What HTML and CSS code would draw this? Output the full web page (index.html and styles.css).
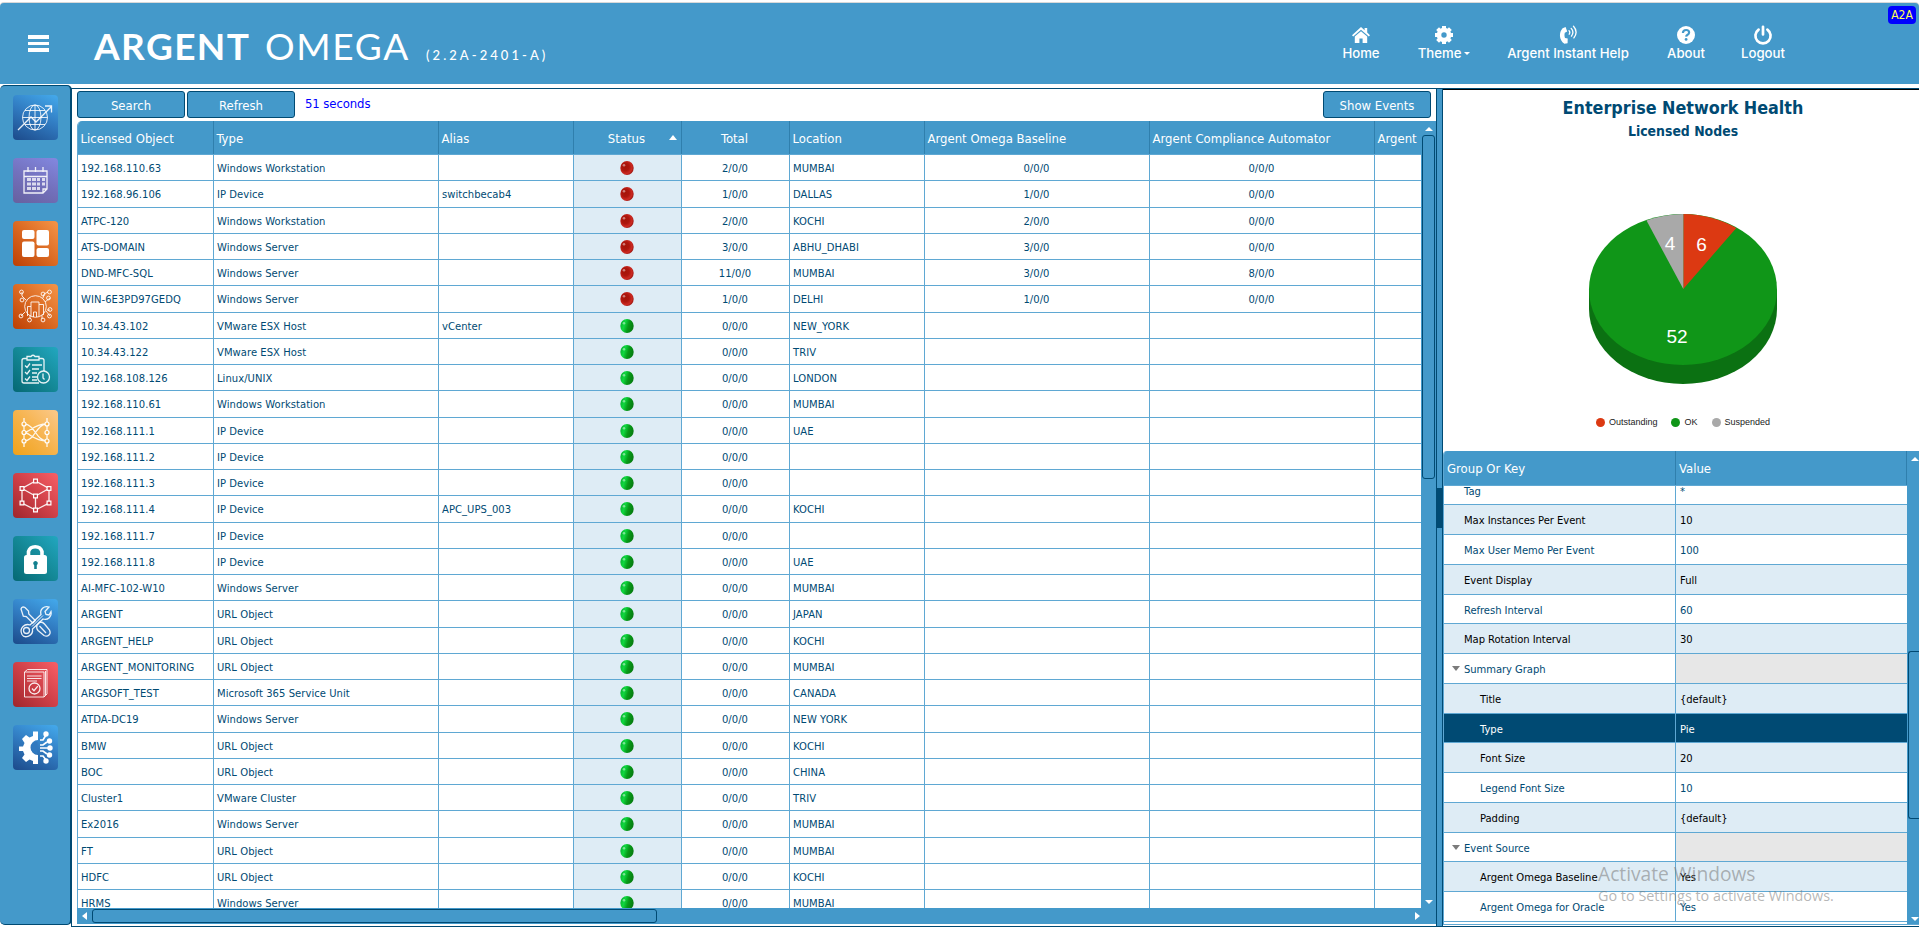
FILE: index.html
```html
<!DOCTYPE html>
<html lang="en">
<head>
<meta charset="utf-8">
<title>Argent Omega</title>
<link rel="stylesheet" href="styles.css">
</head>
<body>
<svg class="defs" width="0" height="0" aria-hidden="true">
  <defs>
    <radialGradient id="red" cx="38%" cy="42%" r="62%"><stop offset="0" stop-color="#a51408"/><stop offset=".45" stop-color="#ad160d"/><stop offset=".8" stop-color="#cc2a22"/><stop offset="1" stop-color="#a31a14"/></radialGradient>
    <linearGradient id="green" x1="0" y1=".3" x2="1" y2=".6"><stop offset="0" stop-color="#08b030"/><stop offset=".3" stop-color="#10d840"/><stop offset=".6" stop-color="#069a18"/><stop offset="1" stop-color="#077a10"/></linearGradient>
  </defs>
</svg>
<header class="topbar">
  <div class="burger"><i></i><i></i><i></i></div>
  <div class="brand"><span class="brand-a">ARGENT</span><span class="brand-o">OMEGA</span><span class="brand-v">(2.2A-2401-A)</span></div>
  <nav class="nav">
    <a class="nav-item n1"><svg viewBox="0 0 20 20"><path fill="#fff" d="M10 2 1 10.2l1.200 1.400L10 4.800l7.800 6.800 1.200-1.400-2.800-2.600V3h-2.600v2.200z"/><path fill="#fff" d="M10 6.200 3.800 11.600V18h4.600v-4.600h3.200V18h4.600v-6.400z"/></svg><span>Home</span></a>
    <a class="nav-item n2"><svg viewBox="0 0 20 20"><circle cx="10" cy="10" r="5" fill="none" stroke="#fff" stroke-width="4.600"/><g stroke="#fff" stroke-width="4"><path d="M10 1v3M10 16v3M1 10h3M16 10h3M3.600 3.600l2 2M14.400 14.400l2 2M3.600 16.400l2-2M14.400 5.600l2-2"/></g></svg><span>Theme<b class="caret"></b></span></a>
    <a class="nav-item n3"><svg viewBox="0 0 20 20"><path fill="#fff" d="M4.600 3.200 7.600 2l1.600 4.600-2.400 1.200c-.5 1.600-.4 3.600.2 5.200l2.700.5-.1 4.700-3.200.6C.8 14.800.8 7.200 4.600 3.200z"/><g fill="none" stroke="#fff" stroke-width="1.300" stroke-linecap="round"><path d="M11 5.600q1.500 1.600.2 3.600M13.200 3.400q3.300 3.500.3 7.700M15.500 1.300q5 5.500.4 11.600"/></g></svg><span>Argent Instant Help</span></a>
    <a class="nav-item n4"><svg viewBox="0 0 20 20"><circle cx="10" cy="10" r="9" fill="#fff"/><path d="M6.900 8q.2-3 3.200-3t3 2.500q0 1.400-1.500 2.200-1.400.8-1.500 2" fill="none" stroke="#4499ca" stroke-width="2.200"/><circle cx="10.100" cy="14.400" r="1.400" fill="#4499ca"/></svg><span>About</span></a>
    <a class="nav-item n5"><svg viewBox="0 0 20 20"><path d="M5.600 4.600a7.600 7.600 0 1 0 8.800 0M10 1.800v7.600" fill="none" stroke="#fff" stroke-width="2.700" stroke-linecap="round"/></svg><span>Logout</span></a>
  </nav>
  <div class="badge">A2A</div>
</header>
<div class="page">
  <aside class="side">
    <div class="tile blue"><svg viewBox="0 0 45 45"><g class="thin"><circle cx="22" cy="22.500" r="12.500"/><ellipse cx="22" cy="22.500" rx="6" ry="12.500"/><path d="M22 10v25M9.500 22.500h25M12 15.500h20M12 29.500h20"/></g><path class="ln" d="M5 35 18 22l5 5L38 12M32 11h6.500v6.500"/></svg></div>
    <div class="tile violet"><svg viewBox="0 0 45 45"><path class="ln" d="M11 13h23v18l-4 4H11zM11 18.500h23M34 31h-4v4M15 9v5M22.500 9v5M30 9v5"/><g class="ln cells"><path d="M14 21.500h4M19 21.500h4M24 21.500h3M29 21.500h3M14 26h4M19 26h4M24 26h3M29 26h3M14 30.500h4M19 30.500h4M24 30.500h3"/></g></svg></div>
    <div class="tile orange"><svg viewBox="0 0 45 45"><g fill="#fff"><rect x="9" y="9" width="12.500" height="9" rx="2"/><rect x="9" y="20.500" width="12.500" height="15.500" rx="2"/><rect x="23.500" y="9" width="12.500" height="15.500" rx="2"/><rect x="23.500" y="27" width="12.500" height="9" rx="2"/></g></svg></div>
    <div class="tile orange"><svg viewBox="0 0 45 45"><g class="thin"><circle cx="22.500" cy="22.500" r="10.800"/><path d="M14.500 32V22.500H18M18 32.500V18h8v14.500M26 20.500h4.500V31M20.500 33v-5h3v5M13 16l-4-4V8M30 14l1-4 4-2M32 18l5-4M12 28l-4 4M17 31v4M29 31v4M33 27l4 5M34 26h3"/><g><circle cx="8.500" cy="8" r="1.900"/><circle cx="9" cy="16" r="1.900"/><circle cx="30" cy="10" r="1.900"/><circle cx="36.500" cy="8" r="1.900"/><circle cx="35.500" cy="14" r="1.900"/><circle cx="8" cy="32" r="1.900"/><circle cx="16.500" cy="36" r="1.900"/><circle cx="30" cy="36" r="1.900"/><circle cx="36.500" cy="32" r="1.900"/><circle cx="37" cy="25.500" r="1.900"/></g></g></svg></div>
    <div class="tile teal"><svg viewBox="0 0 45 45"><path class="ln" d="M14 11.500H11q-2 0-2 2V34q0 2 2 2h15M26 11.500h3q2 0 2 2V24M14 13V9.500h4q2-2.500 4 0h4V13zM12 18.500l2 2 3-4M12 25l2 2 3-4M12 31.500l2 2 3-4M19 18h10M19 22h7M19 26h5M19 30h5M19 33h5"/><circle class="ln" cx="30.500" cy="30" r="6"/><path class="ln" d="M30 26.500V31l1.500 1.500"/></svg></div>
    <div class="tile yellow"><svg viewBox="0 0 45 45"><path class="ln" d="M11 8v29M34 8v29M11 14c11 0 12 17 23 17M11 31c11 0 12-17 23-17M11 22.500c6 0 9-8.500 23-8.500M11 22.500c6 0 9 8.500 23 8.500"/><g class="dot"><circle cx="11" cy="14" r="2"/><circle cx="11" cy="22.500" r="2"/><circle cx="11" cy="31" r="2"/><circle cx="34" cy="14" r="2"/><circle cx="34" cy="22.500" r="2"/><circle cx="34" cy="31" r="2"/></g></svg></div>
    <div class="tile red"><svg viewBox="0 0 45 45"><path class="ln" d="M22.500 8 36 15.500v14.500L22.500 37 9 30V15.500zM9 15.500l13.500 7.500L36 15.500M22.500 23v14"/><g class="sq"><path d="M20.600 6.100h3.800v3.800h-3.800zM7.100 13.600h3.800v3.800H7.100zM34.100 13.600h3.800v3.800h-3.800zM20.600 21.100h3.800v3.800h-3.800zM7.100 28.100h3.800v3.800H7.100zM34.100 28.100h3.800v3.800h-3.800zM20.600 35.100h3.800v3.800h-3.800z"/></g></svg></div>
    <div class="tile teal"><svg viewBox="0 0 45 45"><path d="M15.500 20v-4.500a7 6.500 0 0 1 13.500 0v4.500" fill="none" stroke="#fff" stroke-width="3.600"/><rect x="11" y="19" width="23" height="19" rx="2.500" fill="#fff"/><path d="M22.500 25a2.300 2.300 0 0 1 1.300 4.200V33h-2.600v-3.800A2.300 2.300 0 0 1 22.500 25z" fill="#12808f"/></svg></div>
    <div class="tile blue"><svg viewBox="0 0 45 45"><path class="ln" d="M8 10q1-3 4-1.500l3.500 3.500.3 3 6.500 6.500-2.500 2.500-6.500-6.500-3-.3zM24 26l3-3q3 0 4.500 2l5 6q1.500 3-.5 5t-5 .5l-6-5q-2-2-1-5.500zM26.500 27l6.500 7"/><path class="ln" d="M10 27.500q3-3 7-1.500l11-10.500c-1.500-5 3-9 8-7.500l-4 4.500 1 3 3 .5 2-3.500c1 5-3 9-8 7.500L19.500 30c1 7-8 10-10.500 5.500-1.500-3-1-6 1-8z"/><circle class="ln" cx="13.500" cy="31.500" r="3"/><path class="thin" d="m19 27.500 11-11"/></svg></div>
    <div class="tile red"><svg viewBox="0 0 45 45"><path class="thin" d="M11.500 10h19.500v25H11.500zM11.500 10l3-2.500H34V32l-3 3M32.500 9v24M14 14h14.500M14 16.500h14.500M14 19h10"/><circle class="ln" cx="21.500" cy="26.500" r="5.500"/><path class="ln" d="m19 26.500 2 2.200 3.800-4.500"/></svg></div>
    <div class="tile blue"><svg viewBox="0 0 45 45"><path fill="#fff" fill-rule="evenodd" d="M25 6.500h-5v4.500l-3.500 1.500-3.500-2.500-4 4 2.500 4-1.500 3.500H6v4.500h4l1.500 3.500L9 33l4 4 3.500-2.500L20 36v3h5V30a7.500 7.500 0 0 1 0-15z"/><path d="M24.500 16.500h-1.500a6.500 6.500 0 0 0 0 12.500h1.500z" fill="#3079bf"/><path class="wire" d="M27 15h3l3-5M27 20h3l4-3M27 23h9M27 26h3l4 3M27 31h3l3 4"/><g fill="#fff"><circle cx="33" cy="9" r="2.700"/><circle cx="36.500" cy="16" r="2.700"/><circle cx="37" cy="23" r="2.700"/><circle cx="36.500" cy="30" r="2.700"/><circle cx="33" cy="36" r="2.700"/></g></svg></div>
  </aside>
  <main class="work">
    <section class="left">
      <div class="tools"><button class="btn">Search</button><button class="btn">Refresh</button><span class="timer">51 seconds</span><button class="btn push">Show Events</button></div>
      <div class="grid">
        <div class="view">
          <div class="hrow"><div>Licensed Object</div><div>Type</div><div>Alias</div><div class="mid">Status<i class="sort"></i></div><div class="mid">Total</div><div>Location</div><div>Argent Omega Baseline</div><div>Argent Compliance Automator</div><div>Argent</div></div>
          <div id="rows"></div>
        </div>
        <div class="vbar"><i class="up"></i><div class="vthumb"></div><i class="down"></i></div>
        <div class="hbar"><i class="lf"></i><div class="hthumb"></div><i class="rt"></i></div>
      </div>
    </section>
    <div class="split"><i></i></div>
    <section class="right">
      <div class="chart">
        <h1>Enterprise Network Health</h1>
        <h2>Licensed Nodes</h2>
        <svg class="pie" width="300" height="200" viewBox="1533 200 300 200">
          <path fill="#0b7112" d="M1589 290.500v19a94 75.500 0 0 0 188 0v-19z"/>
          <ellipse cx="1683" cy="290.500" rx="94" ry="75.500" fill="#109618"/>
          <path fill="#dc3912" d="M1683.300 290V215a94 75.500 0 0 1 53 14z"/>
          <path fill="#a9a9a9" d="M1683.300 290V215a94 75.500 0 0 0-36.800 6.500z"/>
          <g class="num"><text x="1701.500" y="252">6</text><text x="1670" y="251">4</text><text x="1677" y="344">52</text></g>
        </svg>
        <div class="legend"><span class="k1">Outstanding</span><span class="k2">OK</span><span class="k3">Suspended</span></div>
      </div>
      <div class="props">
        <div class="pview">
          <div class="phead"><div>Group Or Key</div><div>Value</div></div>
          <div class="pbody"><div id="props"></div></div>
        </div>
        <div class="pbar"><i class="up"></i><div class="pthumb"></div><i class="down"></i></div>
      </div>
    </section>
  </main>
</div>
<div class="activate"><p class="act1">Activate Windows</p><p class="act2">Go to Settings to activate Windows.</p></div>
<script src="script.js"></script>
</body>
</html>
```
FILE: styles.css
```css
* { box-sizing: border-box; }
html, body { margin: 0; height: 928px; overflow: hidden; background: #fff; }
body { font-family: "DejaVu Sans Condensed", "DejaVu Sans", sans-serif; color: #004a73; display: flex; flex-direction: column; position: relative; }
.defs { position: absolute; }
.topbar { height: 81px; margin: 3px 0 1px; flex: none; background: #4499ca; display: flex; position: relative; border-radius: 4px 4px 0 0; box-shadow: 0 -1px 0 #d9d9d9; }
.burger { width: 21px; margin: 32px 0 0 28px; display: flex; flex-direction: column; gap: 3px; }
.burger i { height: 3.500px; background: #fff; }
.brand { margin-left: 45px; width: 620px; color: #fff; font-family: Lato, sans-serif; display: flex; align-items: baseline; white-space: nowrap; padding-top: 21px; line-height: 44px; }
.brand-a { font-size: 37px; font-weight: 700; letter-spacing: 1.400px; width: 171px; }
.brand-o { font-size: 37px; letter-spacing: 1.700px; width: 161px; }
.brand-v { font-size: 13px; letter-spacing: 3.050px; font-weight: 500; }
.nav { display: flex; color: #fff; font: 500 13.200px/16px Inter, sans-serif; margin-left: 607px; padding-top: 22px; }
.nav-item { display: flex; flex-direction: column; align-items: center; white-space: nowrap; }
.nav-item svg { width: 20px; height: 20px; }
.n1 { width: 80px; } .n2 { width: 86px; } .n3 { width: 162px; } .n4 { width: 74px; } .n5 { width: 80px; }
.caret { display: inline-block; border: 3px solid transparent; border-top-color: #fff; border-bottom: 0; margin: 0 0 3px 3px; }
.badge { position: absolute; right: 3px; top: 3px; width: 28px; height: 18px; border-radius: 4px; background: #00f; color: #ffff50; font-size: 12px; line-height: 18px; text-align: center; }
.page { flex: 1; display: flex; min-height: 0; }
.side { width: 72px; height: 840px; background: #4499ca; border: 1px solid #004a73; border-left: 0; border-right-width: 2px; border-radius: 5px; padding: 9px 0 0 13px; display: flex; flex-direction: column; gap: 18px; flex: none; }
.tile { width: 45px; height: 45px; border-radius: 4px; flex: none; }
.tile svg { display: block; width: 45px; height: 45px; fill: none; }
.blue { background: linear-gradient(205deg, #44aaec, #3079bf 50%, #1c4a8a); }
.violet { background: linear-gradient(205deg, #8388e0, #7371bd 50%, #67609f); }
.orange { background: linear-gradient(225deg, #f59548, #db6a23 50%, #bc3f04); }
.teal { background: linear-gradient(225deg, #22a7c0, #148896 50%, #056873); }
.yellow { background: linear-gradient(225deg, #fbc98b, #f6b34c 50%, #f0a21a); }
.red { background: linear-gradient(225deg, #f85f66, #cf4048 50%, #9f262c); }
.ln { fill: none; stroke: #fff; stroke-width: 1.300; stroke-opacity: .9; }
.thin { fill: none; stroke: #fff; stroke-width: 1; stroke-opacity: .85; }
.cells { stroke-width: 3; stroke-opacity: .75; }
.dot { fill: #f6b34c; stroke: #fff; stroke-width: 1.200; }
.sq { fill: #c93c44; stroke: #fff; stroke-width: 1.200; }
.wire { fill: none; stroke: #fff; stroke-width: 1.700; }
.work { flex: 1; margin: 3px 0 0 -1px; height: 839px; border: 1px solid #004a73; border-right: 0; display: flex; min-width: 0; }
.left { width: 1364px; padding: 2px 0 0 5px; display: flex; flex-direction: column; flex: none; }
.tools { display: flex; gap: 2px; height: 30px; align-items: flex-start; }
.btn { width: 108px; height: 27px; padding: 2px 0 0; background: #4499ca; border: 1px solid #004a73; border-radius: 3px; color: #fff; font: 13px/22px "DejaVu Sans Condensed", sans-serif; }
.push { margin: 0 5px 0 auto; }
.timer { color: #00f; font-size: 13px; line-height: 25px; margin-left: 8px; letter-spacing: -.1px; }
.grid { display: grid; grid-template-columns: 1344px 15px; grid-template-rows: 787px 16px; }
.view { overflow: hidden; border-left: 1px solid #5fa8d3; border-radius: 5px 0 0 0; }
.hrow, .row { display: grid; grid-template-columns: 136px 225px 135px 108px 108px 135px 225px 225px 225px; }
.hrow { height: 34px; grid-template-rows: 33px; background: #4499ca; color: #fff; font-size: 13px; line-height: 35px; border-bottom: 1px solid #5fa8d3; }
.hrow > div { border-right: 1px solid #2f7fad; padding-left: 2.500px; white-space: nowrap; position: relative; }
.hrow .mid { text-align: center; padding: 0 2px 0 0; }
.sort { position: absolute; right: 4px; top: 14px; border: 4.500px solid transparent; border-bottom: 5px solid #fff; border-top: 0; }
.row { height: 26.250px; grid-template-rows: 26.250px; font-family: "DejaVu Sans", sans-serif; font-size: 10px; line-height: 27.500px; letter-spacing: .05px; }
.row > div { border-right: 1px solid #5fa8d3; border-bottom: 1px solid #5fa8d3; padding-left: 3px; white-space: nowrap; min-height: 0; }
.row > .c { text-align: center; padding: 0 1px 0 0; }
.row > .st { background: #deecf5; display: flex; justify-content: center; align-items: center; padding: 1px 1px 0 0; }
.row svg { display: block; }
i.up, i.down, i.lf, i.rt { display: block; flex: none; width: 0; height: 0; border: 4px solid transparent; }
i.up { border-bottom: 4.500px solid #fff; border-top: 0; }
i.down { border-top: 4.500px solid #fff; border-bottom: 0; }
i.lf { border-right: 5px solid #fff; border-left: 0; }
i.rt { border-left: 5px solid #fff; border-right: 0; }
.vbar { background: #4499ca; display: flex; flex-direction: column; align-items: center; padding: 6px 0 4px; }
.vthumb { width: 13px; height: 344px; margin: 4px 0 auto; border: 1px solid #004a73; border-radius: 3px; background: #4499ca; }
.hbar { grid-column: 1 / 3; background: #4499ca; display: flex; align-items: center; padding: 0 16px 0 5px; }
.hthumb { width: 565px; height: 14px; margin: 0 auto 0 5px; border: 1px solid #004a73; border-radius: 3px; }
.split { width: 7px; background: #4499ca; border: 1px solid #004a73; border-width: 0 1px; display: flex; align-items: center; flex: none; }
.split i { width: 5px; height: 40px; background: #004a73; }
.right { flex: 1; min-width: 0; display: flex; flex-direction: column; }
.chart { height: 362px; border-top: 1px solid #000; text-align: center; display: flex; flex-direction: column; align-items: center; padding: 6px 0 0 4px; }
h1 { margin: 0; font-size: 17.800px; line-height: 24px; }
h2 { margin: 0; font-size: 13.900px; line-height: 22px; }
.pie { margin-top: 57px; flex: none; }
.num { fill: #fff; font: 19px "Liberation Sans", Arial, sans-serif; text-anchor: middle; }
.legend { display: flex; gap: 14px; font: 9px/14px "Liberation Sans", Arial, sans-serif; color: #222; margin-top: 16px; }
.legend span { display: flex; align-items: center; gap: 4px; }
.legend span::before { content: ""; width: 9px; height: 9px; border-radius: 50%; background: #dc3912; }
.legend .k2::before { background: #109618; }
.legend .k3::before { background: #a9a9a9; }
.props { height: 474px; display: flex; border-bottom: 1px solid #5fa8d3; }
.pview { width: 464px; border-left: 1px solid #5fa8d3; display: flex; flex-direction: column; border-radius: 4px 0 0 0; overflow: hidden; flex: none; }
.phead, .prow { display: grid; grid-template-columns: 232px 231px; }
.phead { height: 35px; grid-template-rows: 34px; flex: none; background: #4499ca; color: #fff; font-size: 13px; line-height: 35px; border-bottom: 1px solid #5fa8d3; }
.phead > div { border-right: 1px solid #2f7fad; padding-left: 3px; }
.pbody { flex: 1; overflow: hidden; display: flex; flex-direction: column; justify-content: flex-start; }
#props { margin-top: -10.400px; }
.prow { height: 29.750px; grid-template-rows: 29.750px; font-family: "DejaVu Sans", sans-serif; font-size: 10px; line-height: 31px; letter-spacing: -.05px; }
.prow > div { border-right: 1px solid #5fa8d3; border-bottom: 1px solid #5fa8d3; padding-left: 4px; white-space: nowrap; }
.prow > div:last-child { border-right: 0; }
.prow > .k { padding-left: 20px; position: relative; }
.prow > .k.deep { padding-left: 36px; }
.prow.alt { background: #deecf5; color: #000; }
.prow.sel { background: #004a73; color: #fff; }
.prow.group .v { background: #e7e7e7; }
.group .k::before { content: ""; position: absolute; left: 8px; top: 12px; border: 4px solid transparent; border-top: 5px solid #7b7b7b; border-bottom: 0; }
.pbar { flex: 1; background: #4499ca; display: flex; flex-direction: column; align-items: flex-end; padding: 6px 0 3px; overflow: hidden; }
.pthumb { width: 11px; height: 168px; margin: 190px 0 auto; border: 1px solid #004a73; border-right: 0; border-radius: 3px 0 0 3px; }
.activate { position: absolute; left: 1598px; top: 860px; color: rgba(120, 120, 120, .55); font-family: "Open Sans", "Noto Sans", sans-serif; white-space: nowrap; }
.activate p { margin: 0; }
.act1 { font-size: 19.200px; line-height: 27px; }
.act2 { font-size: 14.400px; line-height: 18px; }
```
FILE: script.js
```js
const rows = `192.168.110.63|Windows Workstation||r|2/0/0|MUMBAI|0/0/0|0/0/0
192.168.96.106|IP Device|switchbecab4|r|1/0/0|DALLAS|1/0/0|0/0/0
ATPC-120|Windows Workstation||r|2/0/0|KOCHI|2/0/0|0/0/0
ATS-DOMAIN|Windows Server||r|3/0/0|ABHU_DHABI|3/0/0|0/0/0
DND-MFC-SQL|Windows Server||r|11/0/0|MUMBAI|3/0/0|8/0/0
WIN-6E3PD97GEDQ|Windows Server||r|1/0/0|DELHI|1/0/0|0/0/0
10.34.43.102|VMware ESX Host|vCenter|g|0/0/0|NEW_YORK||
10.34.43.122|VMware ESX Host||g|0/0/0|TRIV||
192.168.108.126|Linux/UNIX||g|0/0/0|LONDON||
192.168.110.61|Windows Workstation||g|0/0/0|MUMBAI||
192.168.111.1|IP Device||g|0/0/0|UAE||
192.168.111.2|IP Device||g|0/0/0|||
192.168.111.3|IP Device||g|0/0/0|||
192.168.111.4|IP Device|APC_UPS_003|g|0/0/0|KOCHI||
192.168.111.7|IP Device||g|0/0/0|||
192.168.111.8|IP Device||g|0/0/0|UAE||
AI-MFC-102-W10|Windows Server||g|0/0/0|MUMBAI||
ARGENT|URL Object||g|0/0/0|JAPAN||
ARGENT_HELP|URL Object||g|0/0/0|KOCHI||
ARGENT_MONITORING|URL Object||g|0/0/0|MUMBAI||
ARGSOFT_TEST|Microsoft 365 Service Unit||g|0/0/0|CANADA||
ATDA-DC19|Windows Server||g|0/0/0|NEW YORK||
BMW|URL Object||g|0/0/0|KOCHI||
BOC|URL Object||g|0/0/0|CHINA||
Cluster1|VMware Cluster||g|0/0/0|TRIV||
Ex2016|Windows Server||g|0/0/0|MUMBAI||
FT|URL Object||g|0/0/0|MUMBAI||
HDFC|URL Object||g|0/0/0|KOCHI||
HRMS|Windows Server||g|0/0/0|MUMBAI||`;

const ball = (c) => `<svg width="14" height="14" viewBox="0 0 14 14"><ellipse cx="7" cy="7" rx="6.700" ry="6.900" fill="url(#${c === 'r' ? 'red' : 'green'})"/><circle cx="4" cy="4.200" r="1.300" fill="#fff" fill-opacity=".45"/></svg>`;

document.getElementById('rows').innerHTML = rows.split('\n').map((line) => {
  const [name, type, alias, state, total, loc, base, comp] = line.split('|');
  return `<div class="row"><div>${name}</div><div>${type}</div><div>${alias}</div><div class="st">${ball(state)}</div><div class="c">${total}</div><div>${loc}</div><div class="c">${base}</div><div class="c">${comp}</div><div></div></div>`;
}).join('');

const props = [
  ['Tag', '*', ''], ['Max Instances Per Event', '10', 'alt'], ['Max User Memo Per Event', '100', ''],
  ['Event Display', 'Full', 'alt'], ['Refresh Interval', '60', ''], ['Map Rotation Interval', '30', 'alt'],
  ['Summary Graph', '', 'group'], ['Title', '{default}', 'alt', 1], ['Type', 'Pie', 'sel', 1],
  ['Font Size', '20', 'alt', 1], ['Legend Font Size', '10', '', 1], ['Padding', '{default}', 'alt', 1],
  ['Event Source', '', 'group'], ['Argent Omega Baseline', 'Yes', 'alt', 1], ['Argent Omega for Oracle', 'Yes', '', 1],
];
document.getElementById('props').innerHTML = props.map(([k, v, cls, deep]) =>
  `<div class="prow ${cls}"><div class="k${deep ? ' deep' : ''}">${k}</div><div class="v">${v}</div></div>`).join('');
```
